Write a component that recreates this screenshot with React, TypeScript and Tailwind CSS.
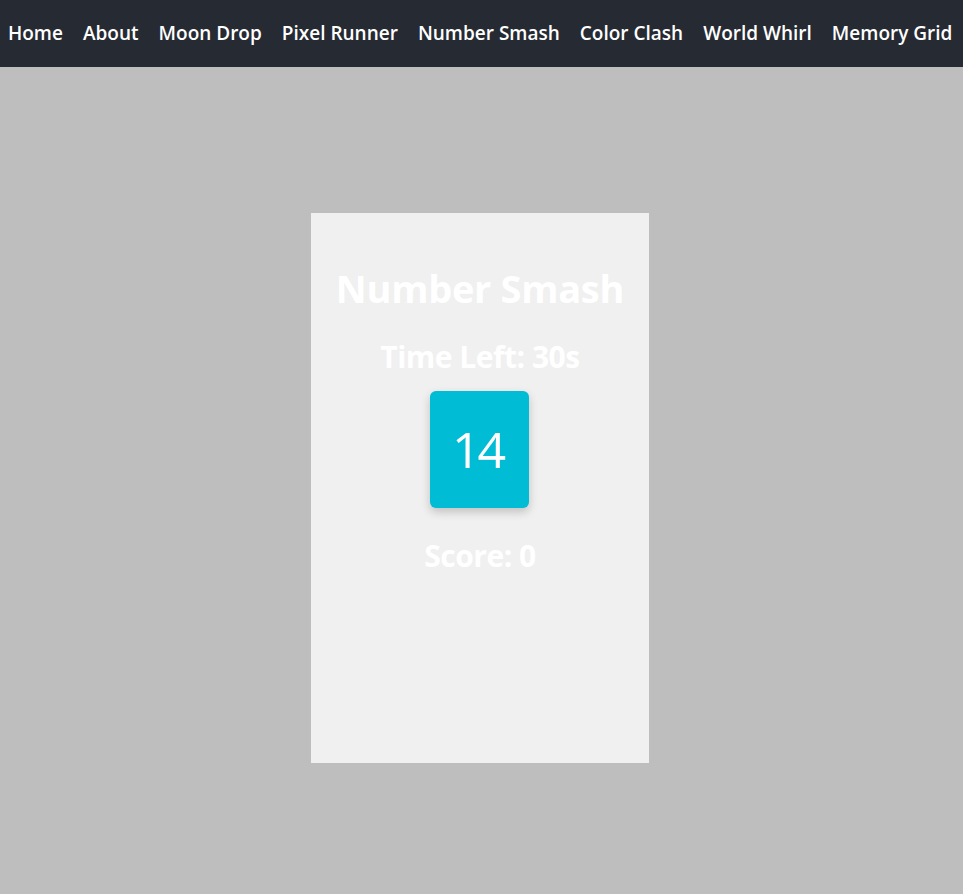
import React from "react";

const links = ["Home", "About", "Moon Drop", "Pixel Runner", "Number Smash", "Color Clash", "World Whirl", "Memory Grid"];

export default function App() {
  return (
    <div className="min-h-screen bg-[#bebebe]" style={{ fontFamily: '"Open Sans", "Noto Sans", sans-serif' }}>
      <nav className="h-[67px] bg-[#262a33] flex items-center px-[8px] gap-[20px]">
        {links.map((l) => (
          <a key={l} className="text-white text-[19px] font-semibold whitespace-nowrap">{l}</a>
        ))}
      </nav>
      <div className="flex justify-center pr-[3px]">
        <div className="mt-[146px] w-[338px] h-[550px] bg-[#f0f0f0] flex flex-col items-center">
          <h1 className="mt-[51px] text-[38px] leading-[48px] tracking-[-0.3px] font-bold text-white">Number Smash</h1>
          <div className="mt-[27px] text-[30px] leading-[36px] tracking-[-0.5px] font-bold text-white">Time Left: 30s</div>
          <div className="mt-[16px] mr-[2px] w-[99px] h-[117px] rounded-[6px] bg-[#00bcd4] flex items-center justify-center pr-[3px] text-white text-[50px] font-medium tracking-[-3px] shadow-[0_4px_10px_rgba(0,0,0,0.2)]">14</div>
          <div className="mt-[30px] text-[30px] leading-[36px] tracking-[-0.5px] font-bold text-white">Score: 0</div>
        </div>
      </div>
    </div>
  );
}
